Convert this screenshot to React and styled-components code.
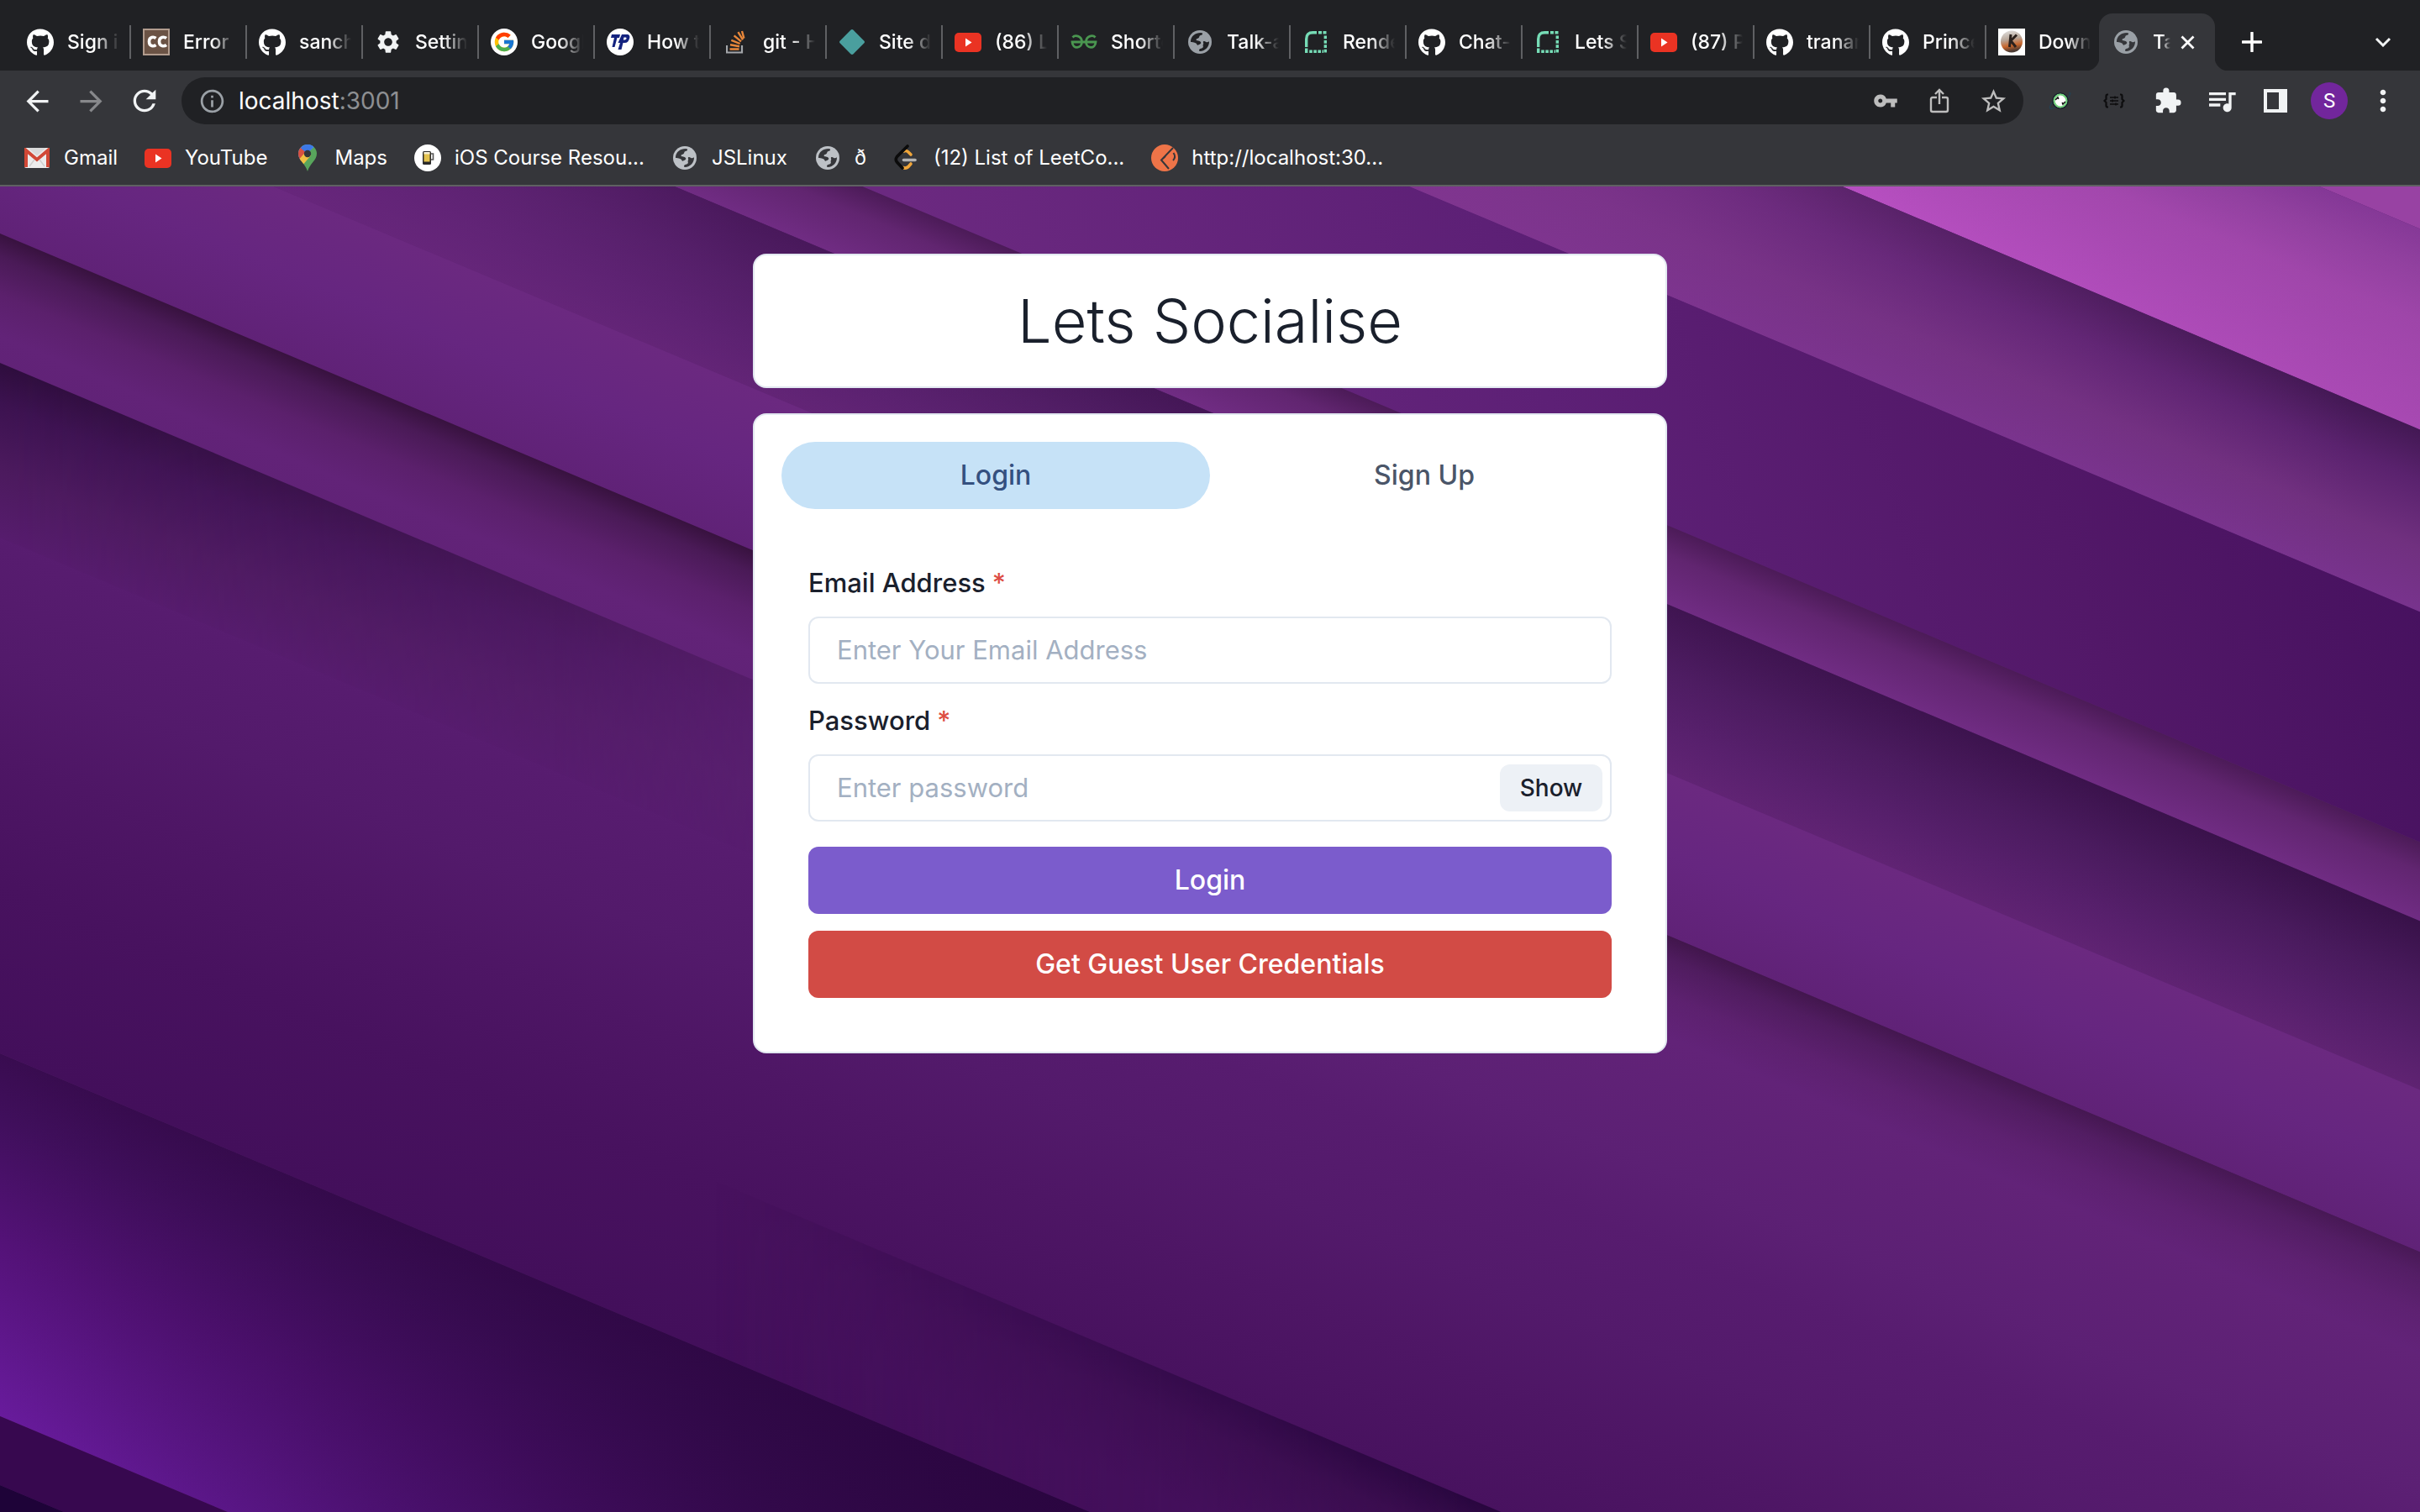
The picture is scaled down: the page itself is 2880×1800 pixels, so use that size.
import React, { useState } from 'react';
import styled, { createGlobalStyle } from 'styled-components';
import { FaGithub } from 'react-icons/fa';
import { FcGoogle } from 'react-icons/fc';
import {
  MdArrowBack,
  MdArrowForward,
  MdRefresh,
  MdSettings,
  MdInfoOutline,
  MdVpnKey,
  MdStarBorder,
  MdExtension,
  MdQueueMusic,
  MdMoreVert,
} from 'react-icons/md';

const GlobalStyle = createGlobalStyle`
  *, *::before, *::after { box-sizing: border-box; }
  body { margin: 0; font-family: Inter, "Liberation Sans", sans-serif; }
  button, input { font: inherit; color: inherit; }
  button { border: 0; padding: 0; background: none; cursor: pointer; }
`;

const Page = styled.div`
  display: flex;
  flex-direction: column;
  min-height: 100vh;
`;

/* ---------- browser frame ---------- */

const TabStrip = styled.div`
  display: flex;
  align-items: flex-end;
  height: 84px;
  padding-left: 16px;
  background: #202124;
  color: #fff;
`;

const Tab = styled.div`
  display: flex;
  align-items: center;
  position: relative;
  flex: none;
  width: 138px;
  height: 68px;
  padding-left: 16px;
  gap: 16px;
  margin-left: ${(p) => (p.$active ? '-2px' : '0')};
  border-radius: 16px 16px 0 0;
  background: ${(p) => (p.$active ? '#35363a' : 'transparent')};

  &::before, &::after {
    content: ${(p) => (p.$active ? '""' : 'none')};
    position: absolute;
    bottom: 0;
    width: 16px;
    height: 16px;
  }
  &::before {
    left: -16px;
    background: radial-gradient(circle at 0 0, transparent 16px, #35363a 17px);
  }
  &::after {
    right: -16px;
    background: radial-gradient(circle at 100% 0, transparent 16px, #35363a 17px);
  }
`;

const TabTitle = styled.span`
  flex: 1;
  min-width: 0;
  overflow: hidden;
  white-space: nowrap;
  font-size: 23px;
  line-height: 32px;
  font-weight: 500;
  mask-image: linear-gradient(to right, #000 calc(100% - ${(p) => (p.$short ? 10 : 28)}px), transparent);
`;

const TabDivider = styled.span`
  flex: none;
  width: 2px;
  height: 40px;
  margin: 0 -2px 0 -4px;
  background: ${(p) => (p.$hidden ? 'transparent' : '#5f6063')};
`;

const Favicon = styled.span`
  display: flex;
  align-items: center;
  justify-content: center;
  flex: none;
  width: 32px;
  height: 32px;
`;

const TabClose = styled.button`
  display: flex;
  flex: none;
  margin: 0 24px 0 -4px;
`;

const StripButton = styled.button`
  display: flex;
  align-items: center;
  justify-content: center;
  width: 64px;
  height: 68px;
  margin-left: ${(p) => (p.$end ? 'auto' : '12px')};
  margin-right: ${(p) => (p.$end ? '12px' : '0')};
`;

const Toolbar = styled.div`
  display: flex;
  align-items: center;
  height: 72px;
  padding: 0 12px;
  background: #35363a;
  color: #f1f3f4;
`;

const IconButton = styled.button`
  display: flex;
  align-items: center;
  justify-content: center;
  flex: none;
  width: 64px;
  height: 56px;
  color: ${(p) => p.$color || 'inherit'};
`;

const Omnibox = styled.div`
  display: flex;
  align-items: center;
  flex: 1;
  height: 56px;
  margin: 0 12px;
  padding: 0 4px;
  border-radius: 28px;
  background: #202124;
`;

const Address = styled.div`
  flex: 1;
  font-size: 28px;
  line-height: 36px;
  color: #fff;
  outline: 0;
`;

const Port = styled.span`
  color: #8d8f92;
`;

const Avatar = styled.span`
  display: flex;
  align-items: center;
  justify-content: center;
  width: 44px;
  height: 44px;
  border-radius: 50%;
  background: #72269c;
  color: #fff;
  font: 24px Roboto, sans-serif;
`;

const Bookmarks = styled.nav`
  display: flex;
  align-items: center;
  height: 66px;
  gap: 32px;
  padding: 0 28px;
  background: #35363a;
  border-bottom: 2px solid #5f6062;
`;

const Bookmark = styled.a`
  display: flex;
  align-items: center;
  gap: 16px;
  color: #fff;
  text-decoration: none;
  font-size: 24px;
  line-height: 32px;
  white-space: nowrap;
`;

/* ---------- login page ---------- */

const Stage = styled.main`
  position: relative;
  flex: 1;
  display: flex;
  flex-direction: column;
  align-items: center;
  gap: 30px;
  padding: 80px 32px;
  overflow: hidden;
  background: #5b1f73;
  color: #1a202c;
`;

const Wallpaper = styled.svg`
  position: absolute;
  inset: 0;
  width: 100%;
  height: 100%;
`;

const Card = styled.section`
  position: relative;
  width: 100%;
  max-width: 1088px;
  padding: 32px;
  border: 2px solid #e2e8f0;
  border-radius: 16px;
  background: #fff;
`;

const Title = styled.h1`
  margin: 0;
  text-align: center;
  font-size: 72px;
  line-height: 92px;
  font-weight: 300;
`;

const TabList = styled.div`
  display: grid;
  grid-template-columns: 1fr 1fr;
  margin-bottom: 32px;
`;

const ModeTab = styled.button`
  height: 80px;
  border-radius: 40px;
  font-size: 32px;
  line-height: 48px;
  font-weight: 500;
  background: ${(p) => (p.$selected ? '#c6e2f7' : 'transparent')};
  color: ${(p) => (p.$selected ? '#34507f' : '#4a5568')};
`;

const Form = styled.form`
  display: flex;
  flex-direction: column;
  gap: 20px;
  padding: 32px;
`;

const Field = styled.div`
  display: flex;
  flex-direction: column;
  gap: 16px;
`;

const Label = styled.label`
  font-size: 31px;
  line-height: 48px;
  font-weight: 500;
`;

const Star = styled.span`
  margin-left: 8px;
  color: #dd4c44;
`;

const InputFrame = styled.div`
  display: flex;
  align-items: center;
  height: 80px;
  padding: 0 9px 0 32px;
  border: 2px solid #e2e8f0;
  border-radius: 12px;
`;

const TextInput = styled.input`
  flex: 1;
  min-width: 0;
  padding: 0;
  border: 0;
  outline: 0;
  background: transparent;
  font-size: 31px;
  line-height: 48px;
  &::placeholder { color: #a3b0c2; opacity: 1; }
`;

const ShowButton = styled.button`
  width: 122px;
  height: 56px;
  border-radius: 12px;
  background: #edf1f6;
  font-size: 28px;
  font-weight: 500;
`;

const Actions = styled.div`
  display: flex;
  flex-direction: column;
  gap: 20px;
  padding-top: 10px;
`;

const ActionButton = styled.button`
  height: 80px;
  border-radius: 12px;
  background: ${(p) => p.$color};
  color: #fff;
  font-size: 32px;
  line-height: 48px;
  font-weight: 500;
`;

/* ---------- drawings ---------- */

const Globe = ({ color = '#9aa0a6', back = '#202124' }) => (
  <svg width="28" height="28" viewBox="0 0 28 28" aria-hidden="true">
    <circle cx="14" cy="14" r="14" fill={color} />
    <path
      d="M3 12.500C3.600 7 8.500 3 15 3L17 3.400C17.400 5 16.400 5.800 14.800 6C13 6.300 13.600 8 12.600 9C11.400 10.200 9.400 9.800 9.600 11.400C9.800 12.800 14 11.800 15 14C16 16.400 13.400 16.600 12 17.600C10.400 18.600 10.800 16.600 9.400 15.600C7.600 14.400 5 13.600 3 14Z"
      fill={back}
    />
    <path
      d="M25 13.200C25.200 19.400 20.400 24.800 14.200 25C13 25 12.600 23.800 13.400 22.800C14.400 21.600 16.600 22.200 17.600 20.600C18.600 19 16.800 18.200 18 16.800C18.800 15.800 17.400 14.600 18 13.600C18.600 12.600 20 13.200 21.200 14C22.600 14.800 23.800 14 25 13.200Z"
      fill={back}
    />
  </svg>
);

const YouTube = () => (
  <svg width="32" height="23" viewBox="0 0 32 23" aria-hidden="true">
    <rect width="32" height="23" rx="5" fill="#ea3323" />
    <path d="M13 6.500L20.500 11.500L13 16.500Z" fill="#fff" />
  </svg>
);

const CodeChef = () => (
  <svg width="32" height="32" viewBox="0 0 32 32" aria-hidden="true">
    <rect x="1" y="1" width="30" height="30" fill="#6b5345" stroke="#b29c8e" strokeWidth="2" />
    <g fill="none" stroke="#fff" strokeWidth="3.600">
      <path d="M15.500 11.500C13 9.500 7.500 9.500 7.500 15.500S13 21.500 15.500 19.500" />
      <path d="M28 11.500C25.500 9.500 19.500 9.500 19.500 15.500S25.500 21.500 28 19.500" />
    </g>
  </svg>
);

const GoogleDisc = () => (
  <svg width="32" height="32" viewBox="0 0 32 32" aria-hidden="true">
    <circle cx="16" cy="16" r="16" fill="#fff" />
    <g transform="translate(2.500 2.500)"><FcGoogle size={27} /></g>
  </svg>
);

const TutorialsPoint = () => (
  <svg width="32" height="32" viewBox="0 0 32 32" aria-hidden="true">
    <circle cx="16" cy="16" r="16" fill="#fff" />
    <path d="M6 7H16L15 11H12.500L9.500 22H6.500L9 11H5Z" fill="#14237f" />
    <path d="M18 7H24C27 7 28 9 27 12C26.200 15 24.500 17 21.500 17H19.500L17.500 25H13.500L16 17H13.500ZM20.500 10.500L19.800 13.500H21.500C23.500 13.500 24.500 10.500 22.500 10.500Z" fill="#14237f" fillRule="evenodd" />
  </svg>
);

const StackOverflow = () => (
  <svg width="24" height="28" viewBox="0 0 24 28" aria-hidden="true">
    <path d="M1 18V26.500H19V18" fill="none" stroke="#a3a6aa" strokeWidth="2.200" />
    <g stroke="#e8873a" strokeWidth="2.400">
      <path d="M4.500 22.500H15.500M5 17.200L16 19.200M6.300 11.800L16.600 16M9.600 6.400L18 13.400M14.400 2.200L20 11.400M19 1L21.400 9.600" />
    </g>
  </svg>
);

const Diamond = () => (
  <svg width="32" height="32" viewBox="0 0 32 32" aria-hidden="true">
    <path d="M14.400 1.800Q16 .4 17.600 1.800L30.200 14.400Q31.800 16 30.200 17.600L17.600 30.200Q16 31.600 14.400 30.200L1.800 17.600Q.2 16 1.800 14.400Z" fill="#4a9f9e" />
  </svg>
);

const Geeks = () => (
  <svg width="32" height="18" viewBox="0 0 32 18" aria-hidden="true">
    <g fill="none" stroke="#4a9650" strokeWidth="2.800">
      <path d="M2.500 3.500C5 .6 13.500 .8 13.500 9C13.500 17 2.500 18 2 9H30C29.500 18 18.500 17 18.500 9C18.500 .8 27 .6 29.500 3.500" />
    </g>
  </svg>
);

const Render = () => (
  <svg width="26" height="26" viewBox="0 0 26 26" aria-hidden="true">
    <g fill="none" stroke="#76dcb6" strokeWidth="3.400">
      <path d="M1.700 19V9.500Q1.700 1.700 9.500 1.700H14" />
      <path d="M16 1.700H26" strokeDasharray="4 1.500" />
      <path d="M24.300 5.500V26" strokeDasharray="3.800 1.600" />
      <path d="M1.700 20.500V26" />
      <path d="M5.200 24.300H22" strokeDasharray="3.600 1.500" />
    </g>
  </svg>
);

const KBall = () => (
  <svg width="32" height="32" viewBox="0 0 32 32" aria-hidden="true">
    <defs>
      <linearGradient id="kball" x1="0" y1="0" x2="0.200" y2="1">
        <stop offset="0" stopColor="#e4e4e4" />
        <stop offset="0.450" stopColor="#b8a79a" />
        <stop offset="0.750" stopColor="#c9662c" />
        <stop offset="1" stopColor="#4a3a33" />
      </linearGradient>
    </defs>
    <rect width="32" height="32" fill="#fff" />
    <circle cx="16" cy="15.500" r="13" fill="url(#kball)" />
    <path d="M15 7L13.500 22M22 7.500L15 14.500L21 22" fill="none" stroke="#2b211d" strokeWidth="3" />
  </svg>
);

const Gmail = () => (
  <svg width="32" height="24" viewBox="0 0 32 24" aria-hidden="true">
    <rect x="1" width="30" height="24" rx="2" fill="#ececec" />
    <path d="M3 23V3L16 14L29 3V23" fill="none" stroke="#d14836" strokeWidth="4" />
    <path d="M5 0H27L16 9.500Z" fill="#dadada" />
    <path d="M7 22L13 14M25 22L19 14" stroke="#cfcfcf" strokeWidth="1.500" />
  </svg>
);

const Maps = () => (
  <svg width="22" height="32" viewBox="0 0 22 32" aria-hidden="true">
    <defs>
      <clipPath id="pin"><path d="M11 0A11 11 0 0 1 22 11C22 19 14 22 11 32C8 22 0 19 0 11A11 11 0 0 1 11 0Z" /></clipPath>
    </defs>
    <g clipPath="url(#pin)">
      <rect width="22" height="32" fill="#58a55c" />
      <path d="M0 22L11 10L22 0H0Z" fill="#4285f4" />
      <path d="M0 24L13 9L3 2L-3 8Z" fill="#d95140" />
      <path d="M-1 20L8 9.500L15 13L4 26Z" fill="#f2c043" />
      <path d="M2.500 4L11 11L18 2L11 -1Z" fill="#3d78e6" />
    </g>
    <circle cx="11" cy="11" r="4.200" fill="#35363a" />
  </svg>
);

const Beer = () => (
  <svg width="32" height="32" viewBox="0 0 32 32" aria-hidden="true">
    <circle cx="16" cy="16" r="16" fill="#fff" />
    <path d="M20 11H22.500V18H20" fill="none" stroke="#555" strokeWidth="1.600" />
    <rect x="10" y="8" width="10" height="16" rx="1.500" fill="#2a2a2a" />
    <rect x="11.500" y="9.500" width="7" height="11" fill="#e3c24c" />
    <rect x="11.500" y="9" width="7" height="2.500" fill="#f6efd6" />
  </svg>
);

const LeetCode = () => (
  <svg width="32" height="32" viewBox="0 0 32 32" fill="none" strokeWidth="3.600" strokeLinecap="round" aria-hidden="true">
    <path d="M12.500 8Q15.500 6.600 18 9L21 12" stroke="#f0a63a" />
    <path d="M21 23L18 26.500Q15 29 11.500 27.500" stroke="#f0a63a" />
    <path d="M17 2L4.500 14.500Q2 18 4.500 21L11 28" stroke="#0b0b0b" />
    <path d="M12.500 18.500H26" stroke="#b3b3b3" />
  </svg>
);

const Postman = () => (
  <svg width="32" height="32" viewBox="0 0 32 32" fill="none" aria-hidden="true">
    <circle cx="16" cy="16" r="16" fill="#ee7448" />
    <path d="M26 4L12 18.500L21 29M12 18.500L17 14" stroke="#35363a" strokeWidth="2" />
    <path d="M26.500 10Q30 15 26 19" stroke="#35363a" strokeWidth="2" />
  </svg>
);

const CloseGlyph = () => (
  <svg width="17" height="17" viewBox="0 0 17 17" aria-hidden="true">
    <path d="M1.500 1.500L15.500 15.500M15.500 1.500L1.500 15.500" stroke="#fff" strokeWidth="2.800" />
  </svg>
);

const PlusGlyph = () => (
  <svg width="24" height="24" viewBox="0 0 24 24" aria-hidden="true">
    <path d="M12 1V23M1 12H23" stroke="#fff" strokeWidth="3.400" strokeLinecap="round" />
  </svg>
);

const ChevronGlyph = () => (
  <svg width="20" height="12" viewBox="0 0 20 12" aria-hidden="true">
    <path d="M2 2L10 10L18 2" fill="none" stroke="#f1f3f4" strokeWidth="3" />
  </svg>
);

const ShareGlyph = () => (
  <svg width="24" height="30" viewBox="0 0 24 30" fill="none" stroke="currentColor" strokeWidth="2.400" aria-hidden="true">
    <path d="M9 11H4Q2 11 2 13V26Q2 28 4 28H20Q22 28 22 26V13Q22 11 20 11H15" />
    <path d="M12 19V3M7 7L12 2L17 7" />
  </svg>
);

const SyncGlyph = () => (
  <svg width="30" height="26" viewBox="0 0 30 26" fill="none" aria-hidden="true">
    <path d="M6 14Q0 22 4 22.500T24 9Q29 3 25 3.500" stroke="#26404f" strokeWidth="1.600" />
    <circle cx="15" cy="13" r="9" fill="#fff" stroke="#16202b" strokeWidth="1.600" />
    <circle cx="15" cy="13" r="7.400" stroke="#6fd07a" strokeWidth="2" />
    <path d="M9 12L12 9L12.800 11M21 14L18 17L17.200 15" stroke="#111" strokeWidth="1.600" />
  </svg>
);

const BracesGlyph = () => (
  <svg width="26" height="18" viewBox="0 0 26 18" fill="none" stroke="#0d0d0e" strokeWidth="2.200" aria-hidden="true">
    <path d="M6 1.500H5Q3.500 1.500 3.500 3.500V7L1.500 9L3.500 11V14.500Q3.500 16.500 5 16.500H6M20 1.500H21Q22.500 1.500 22.500 3.500V7L24.500 9L22.500 11V14.500Q22.500 16.500 21 16.500H20" />
    <path d="M8 5H18M8 9H18M8 13H18M14 3.500V6.500M11 7.500V10.500M15 11.500V14.500" strokeWidth="1.500" />
  </svg>
);

const PanelGlyph = () => (
  <svg width="28" height="28" viewBox="0 0 28 28" aria-hidden="true">
    <path d="M0 0H28V28H0ZM4 4V24H18V4Z" fill="#f1f3f4" fillRule="evenodd" />
  </svg>
);

/* Slanted ribbons: every rect sits in a frame skewed to the ribbons' angle. */
const gradients = {
  a: [[-940, '#7a3290'], [-890, '#90409f'], [-830, '#a649b0'], [-701, '#b74fc1']],
  b: [[-701, '#431854'], [-640, '#5a226e'], [-560, '#70307f'], [-484, '#78338d']],
  c: [[-210, '#4c1b58'], [-175, '#612570'], [-116, '#702c83']],
  d: [[-116, '#381149'], [-40, '#481a5c'], [30, '#551f6a'], [85, '#5f2372']],
  e: [[85, '#6b2980'], [180, '#662680'], [278, '#602277']],
  f: [[278, '#38123f'], [305, '#4a1a57'], [350, '#5b206c'], [400, '#622378'], [560, '#5c2074'], [650, '#571c6f'], [780, '#531a6b'], [900, '#4e1665'], [1050, '#48125f'], [1254, '#430f5b']],
  g: [[432, '#2e0d3d'], [480, '#3c1250'], [560, '#4c1a5e'], [640, '#561c6d']],
  h: [[1048, '#24053a'], [1100, '#360c4a'], [1200, '#430f5a']],
  i: [[1254, '#390c50'], [1330, '#400f5c'], [1480, '#541278'], [1686, '#681b9c']],
};

/* Sideways washes, left to right: [offset, colour, opacity]. */
const washes = {
  'fade-out': [[0, '#fff', 1], [0.6, '#fff', 0.5], [1, '#fff', 0]],
  'fade-in': [[0, '#fff', 0], [1, '#fff', 0.9]],
  lit: [[0, '#80358f', 1], [0.5, '#80358f', 0.4], [1, '#80358f', 0]],
  'lit-strip': [[0, '#69277e', 1], [0.2, '#69277e', 0.6], [0.31, '#69277e', 0.35], [0.7, '#69277e', 0.15], [1, '#69277e', 0]],
  rose: [[0, '#9441a0', 0], [1, '#9441a0', 0.45]],
  lift: [[0, '#62237a', 0], [1, '#62237a', 0.4]],
  dusk: [[0, '#2c0742', 0], [0.7, '#2c0742', 0.8], [1, '#2a0540', 1]],
};

const Backdrop = () => (
  <Wallpaper viewBox="0 0 2880 1578" preserveAspectRatio="xMidYMin slice" aria-hidden="true">
    <defs>
      {Object.entries(gradients).map(([id, stops]) => {
        const top = stops[0][0];
        const bottom = stops[stops.length - 1][0];
        return (
          <linearGradient key={id} id={`band-${id}`} gradientUnits="userSpaceOnUse" x1="0" x2="0" y1={top} y2={bottom}>
            {stops.map(([y, color]) => (
              <stop key={y} offset={(y - top) / (bottom - top)} stopColor={color} />
            ))}
          </linearGradient>
        );
      })}
      {Object.entries(washes).map(([id, stops]) => (
        <linearGradient key={id} id={id}>
          {stops.map(([offset, color, opacity]) => (
            <stop key={offset} offset={offset} stopColor={color} stopOpacity={opacity} />
          ))}
        </linearGradient>
      ))}
      <linearGradient id="band-plain" gradientUnits="userSpaceOnUse" x1="1160" y1="0" x2="2880" y2="-724">
        <stop offset="0" stopColor="#6b2980" />
        <stop offset="0.400" stopColor="#5d2076" />
        <stop offset="0.720" stopColor="#521868" />
        <stop offset="1" stopColor="#45105e" />
      </linearGradient>
      <mask id="mask-left"><rect x="0" y="400" width="1100" height="900" fill="url(#fade-out)" /></mask>
      <mask id="mask-right"><rect x="850" y="1000" width="950" height="300" fill="url(#fade-in)" /></mask>
    </defs>
    <g transform="translate(0 -222) skewY(22.830)">
      <rect x="0" y="-1300" width="2880" height="360" fill="#9842a3" />
      <rect x="0" y="-940" width="2880" height="239" fill="url(#band-a)" />
      <rect x="2190" y="-940" width="690" height="239" fill="url(#rose)" />
      <rect x="0" y="-701" width="2880" height="217" fill="url(#band-b)" />
      <rect x="1600" y="-701" width="1200" height="217" fill="url(#lit)" />
      <rect x="0" y="-484" width="2880" height="274" fill="url(#band-plain)" />
      <rect x="0" y="-210" width="2880" height="94" fill="url(#band-c)" />
      <rect x="0" y="-116" width="2880" height="201" fill="url(#band-d)" />
      <rect x="0" y="-116" width="2880" height="201" fill="url(#lit-strip)" />
      <rect x="0" y="85" width="2880" height="193" fill="url(#band-e)" />
      <rect x="0" y="278" width="2880" height="976" fill="url(#band-f)" />
      <rect x="900" y="278" width="1980" height="122" fill="url(#lift)" />
      <g mask="url(#mask-left)">
        <rect x="0" y="432" width="1100" height="208" fill="url(#band-g)" />
      </g>
      <g mask="url(#mask-right)">
        <rect x="850" y="1048" width="950" height="206" fill="url(#band-h)" />
      </g>
      <rect x="0" y="1254" width="2880" height="432" fill="url(#band-i)" />
      <rect x="0" y="1254" width="1300" height="432" fill="url(#dusk)" />
      <rect x="0" y="1686" width="2880" height="82" fill="#37084f" />
      <rect x="0" y="1768" width="2880" height="200" fill="#1e0338" />
    </g>
  </Wallpaper>
);

const github = <FaGithub size={33} color="#fff" />;

const tabs = [
  ['Sign in', github],
  ['Error', <CodeChef />],
  ['sanchit', github],
  ['Settings', <MdSettings size={32} color="#f1f3f4" />],
  ['Google', <GoogleDisc />],
  ['How to', <TutorialsPoint />],
  ['git - How', <StackOverflow />],
  ['Site de', <Diamond />],
  ['(86) Lo', <YouTube />],
  ['Shorte', <Geeks />],
  ['Talk-a', <Globe />],
  ['Render', <Render />],
  ['Chat-A', github],
  ['Lets So', <Render />],
  ['(87) Pr', <YouTube />],
  ['tranam', github],
  ['Prince', github],
  ['Downlo', <KBall />],
];

const bookmarks = [
  ['Gmail', <Gmail />],
  ['YouTube', <YouTube />],
  ['Maps', <Maps />],
  ['iOS Course Resou...', <Beer />],
  ['JSLinux', <Globe color="#bdc1c6" back="#35363a" />],
  ['ð', <Globe color="#bdc1c6" back="#35363a" />],
  ['(12) List of LeetCo...', <LeetCode />],
  ['http://localhost:30...', <Postman />],
];

export default function App() {
  const [mode, setMode] = useState('login');

  return (
    <Page>
      <GlobalStyle />
      <TabStrip role="tablist" aria-label="Browser tabs">
        {tabs.map(([title, icon], i) => (
          <Tab key={i} role="tab">
            <Favicon>{icon}</Favicon>
            <TabTitle>{title}</TabTitle>
            <TabDivider $hidden={i === tabs.length - 1} />
          </Tab>
        ))}
        <Tab role="tab" aria-selected="true" $active>
          <Favicon><Globe back="#35363a" /></Favicon>
          <TabTitle $short>Talk</TabTitle>
          <TabClose aria-label="Close tab"><CloseGlyph /></TabClose>
        </Tab>
        <StripButton aria-label="New tab"><PlusGlyph /></StripButton>
        <StripButton aria-label="Search tabs" $end><ChevronGlyph /></StripButton>
      </TabStrip>

      <Toolbar>
        <IconButton aria-label="Back"><MdArrowBack size={39} /></IconButton>
        <IconButton aria-label="Forward" $color="#87888b"><MdArrowForward size={39} /></IconButton>
        <IconButton aria-label="Reload"><MdRefresh size={40} /></IconButton>
        <Omnibox>
          <IconButton aria-label="Site information" $color="#9aa0a6"><MdInfoOutline size={33} /></IconButton>
          <Address role="textbox" aria-label="Address" contentEditable suppressContentEditableWarning spellCheck={false}>
            localhost<Port>:3001</Port>
          </Address>
          <IconButton aria-label="Passwords" $color="#bdbdbd"><MdVpnKey size={30} /></IconButton>
          <IconButton aria-label="Share" $color="#bdbdbd"><ShareGlyph /></IconButton>
          <IconButton aria-label="Bookmark this page" $color="#bdbdbd"><MdStarBorder size={35} /></IconButton>
        </Omnibox>
        <IconButton aria-label="Sync extension"><SyncGlyph /></IconButton>
        <IconButton aria-label="Formatter extension"><BracesGlyph /></IconButton>
        <IconButton aria-label="Extensions"><MdExtension size={34} /></IconButton>
        <IconButton aria-label="Media controls"><MdQueueMusic size={40} /></IconButton>
        <IconButton aria-label="Side panel"><PanelGlyph /></IconButton>
        <IconButton aria-label="Profile"><Avatar>S</Avatar></IconButton>
        <IconButton aria-label="Menu"><MdMoreVert size={40} /></IconButton>
      </Toolbar>

      <Bookmarks aria-label="Bookmarks">
        {bookmarks.map(([name, icon]) => (
          <Bookmark key={name} href="#">
            <Favicon>{icon}</Favicon>
            {name}
          </Bookmark>
        ))}
      </Bookmarks>

      <Stage>
        <Backdrop />
        <Card>
          <Title>Lets Socialise</Title>
        </Card>
        <Card>
          <TabList role="tablist" aria-label="Account">
            <ModeTab role="tab" aria-selected={mode === 'login'} $selected={mode === 'login'} onClick={() => setMode('login')}>
              Login
            </ModeTab>
            <ModeTab role="tab" aria-selected={mode === 'signup'} $selected={mode === 'signup'} onClick={() => setMode('signup')}>
              Sign Up
            </ModeTab>
          </TabList>
          <Form onSubmit={(e) => e.preventDefault()}>
            <Field>
              <Label htmlFor="email">Email Address<Star>*</Star></Label>
              <InputFrame>
                <TextInput id="email" type="email" placeholder="Enter Your Email Address" />
              </InputFrame>
            </Field>
            <Field>
              <Label htmlFor="password">Password<Star>*</Star></Label>
              <InputFrame>
                <TextInput id="password" type="password" placeholder="Enter password" />
                <ShowButton type="button">Show</ShowButton>
              </InputFrame>
            </Field>
            <Actions>
              <ActionButton type="submit" $color="#7b5ccc">Login</ActionButton>
              <ActionButton type="button" $color="#d24b45">Get Guest User Credentials</ActionButton>
            </Actions>
          </Form>
        </Card>
      </Stage>
    </Page>
  );
}
